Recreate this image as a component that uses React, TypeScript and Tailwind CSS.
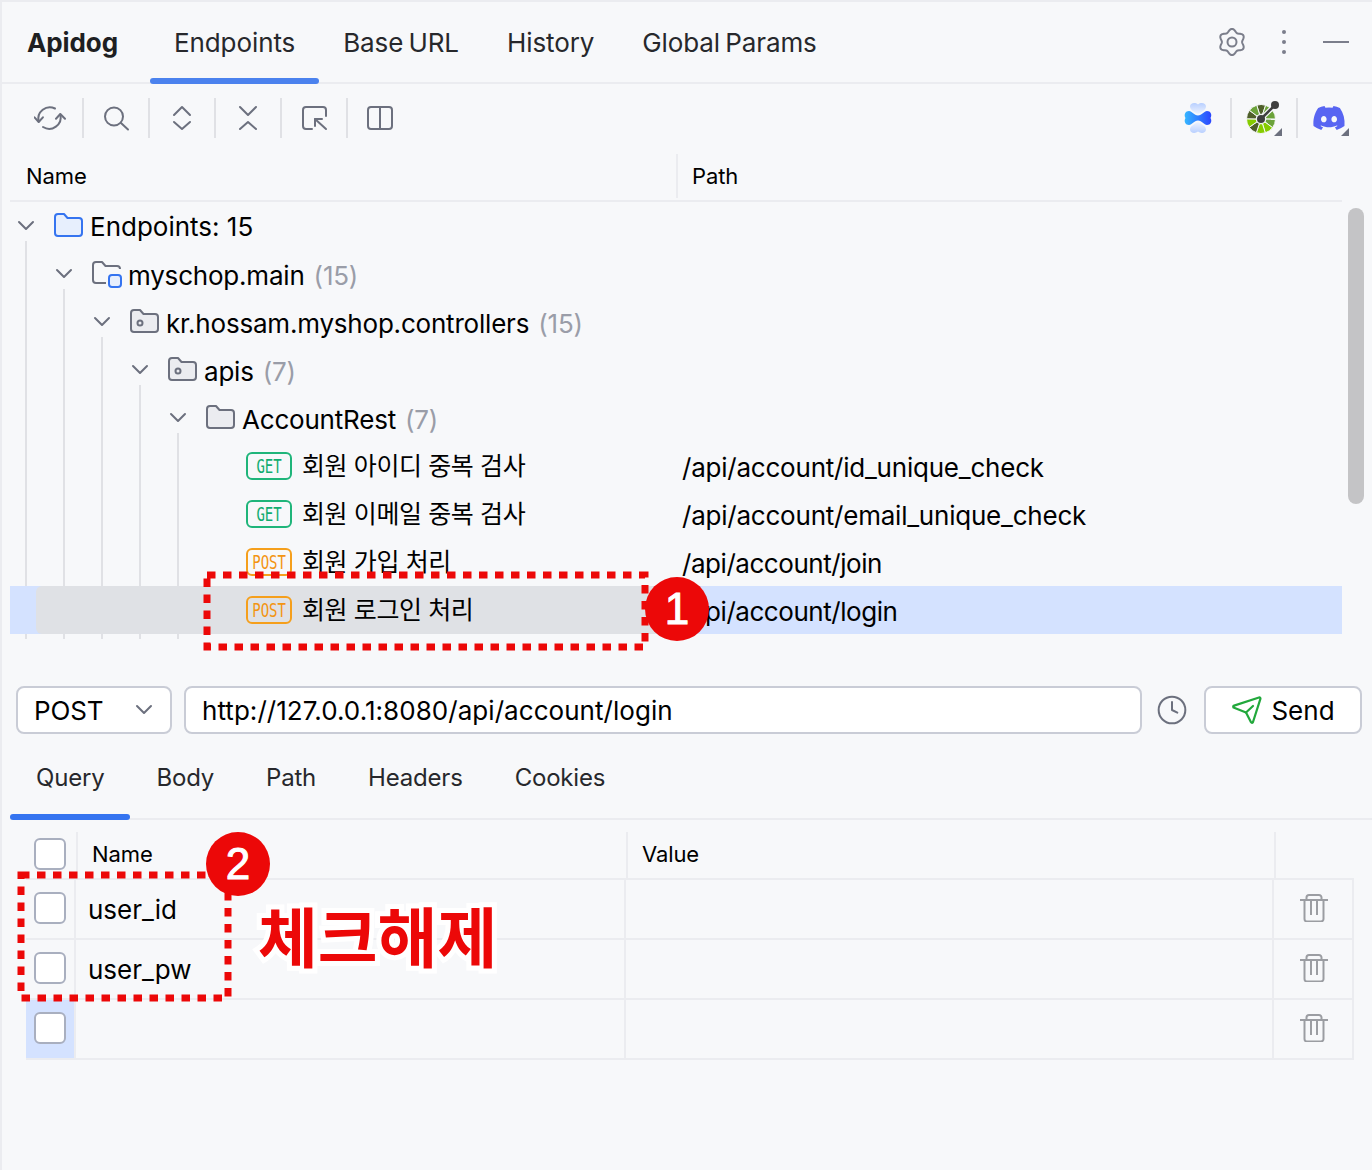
import { Clock } from "lucide-react";
import { FaDiscord } from "react-icons/fa6";

const topTabs = ["Endpoints", "Base URL", "History", "Global Params"];
const requestTabs = ["Query", "Body", "Path", "Headers", "Cookies"];

function ToolIcon({ children }: { children: React.ReactNode }) {
    return (
        <svg viewBox="0 0 32 32" className="h-8 w-8" fill="none" stroke="#6c707e" strokeWidth="2" strokeLinecap="round" strokeLinejoin="round">
            {children}
        </svg>
    );
}

const toolbar = [
    <>
        <path d="M0.500 15.300L4.700 20l4.200-4.700" />
        <path d="M4.700 19.500A11.500 11.500 0 0 1 21 6.500" />
        <path d="M22 16.700L26.300 12l4.700 4.700" />
        <path d="M26.300 12.500A11.500 11.500 0 0 1 9 25" />
    </>,
    <>
        <circle cx="14" cy="14.500" r="9" />
        <path d="M21 21l7 6.500" />
    </>,
    <>
        <path d="M8 13l8-8 8 8" />
        <path d="M8 20l8 7 8-7" />
    </>,
    <>
        <path d="M8 5l8 8 8-8" />
        <path d="M8 27l8-7 8 7" />
    </>,
    <>
        <path d="M14 27H8a3 3 0 0 1-3-3V8a3 3 0 0 1 3-3h17a3 3 0 0 1 3 3v6" />
        <path d="M28 27L17 17" />
        <path d="M17 24v-7h7" />
    </>,
    <>
        <rect x="4" y="5" width="24" height="22" rx="3" />
        <path d="M16 5v22" />
    </>,
];

function GearIcon() {
    const points: string[] = [];
    for (let i = 0; i < 120; i++) {
        const a = (i / 120) * Math.PI * 2;
        const r = 11.6 + 1.5 * Math.cos(6 * a);
        points.push(`${15 + r * Math.sin(a)},${15 - r * Math.cos(a)}`);
    }
    return (
        <svg viewBox="0 0 30 30" className="h-[30px] w-[30px]" fill="none" stroke="#7b7e8b" strokeWidth="2">
            <polygon points={points.join(" ")} strokeLinejoin="round" />
            <circle cx="15" cy="15" r="4.500" />
        </svg>
    );
}

function Corner() {
    return (
        <svg viewBox="0 0 8 8" className="absolute bottom-0 right-0 h-2 w-2">
            <path d="M8 0v8H0z" fill="#6c707e" />
        </svg>
    );
}

function BoneLogo() {
    return (
        <svg viewBox="0 0 32 32" className="h-8 w-8">
            <defs>
                <linearGradient id="bone" x1="0" y1="0" x2="1" y2="0">
                    <stop offset="0" stopColor="#35b6ff" />
                    <stop offset="1" stopColor="#2b45ff" />
                </linearGradient>
                <linearGradient id="heartTop" x1="0" y1="0" x2="0" y2="1">
                    <stop offset="0" stopColor="#b9d0ff" />
                    <stop offset="1" stopColor="#eef3ff" />
                </linearGradient>
                <linearGradient id="heartBottom" x1="0" y1="0" x2="0" y2="1">
                    <stop offset="0" stopColor="#eef3ff" />
                    <stop offset="1" stopColor="#b9d0ff" />
                </linearGradient>
            </defs>
            <path d="M16 12C12 10 8 7.500 8 4.500 8 1 13 0 16 2.500 19 0 24 1 24 4.500c0 3-4 5.500-8 7.500z" fill="url(#heartTop)" />
            <path d="M16 20c-4 2-8 4.500-8 7.500 0 3.500 5 4.500 8 2 3 2.500 8 1.500 8-2 0-3-4-5.500-8-7.500z" fill="url(#heartBottom)" />
            <path d="M7 9c3 0 5 4.500 9 4.500s6-4.500 9-4.500c3.500 0 5.500 3.500 3.500 7 2 3.500 0 7-3.500 7-3 0-5-4.500-9-4.500s-6 4.500-9 4.500c-3.500 0-5.500-3.500-3.500-7-2-3.500 0-7 3.500-7z" fill="url(#bone)" />
        </svg>
    );
}

function OpenApiLogo() {
    const colors = ["#4f5f2a", "#6ba23a", "#6ba23a", "#6ba23a", "#86cc00", "#86cc00", "#4f5f2a", "#86cc00", "#4f5f2a", "#6ba23a"];
    const cx = 15;
    const cy = 19;
    const point = (r: number, a: number) => `${cx + r * Math.sin(a)} ${cy - r * Math.cos(a)}`;
    return (
        <svg viewBox="0 0 34 36" className="h-9 w-[34px]">
            {colors.map((c, i) => {
                const a = (i * Math.PI * 2) / 10 - 0.3;
                const b = a + (Math.PI * 2) / 10;
                return (
                    <path
                        key={i}
                        d={`M${point(5, a)} L${point(14.5, a)} A14.5 14.5 0 0 1 ${point(14.5, b)} L${point(5, b)} Z`}
                        fill={c}
                        stroke="#f7f8fa"
                        strokeWidth="1"
                    />
                );
            })}
            <path d={`M${cx} ${cy}L29 5`} stroke="#f7f8fa" strokeWidth="5" />
            <path d={`M${cx} ${cy}L29 5`} stroke="#3f3f3f" strokeWidth="2.500" />
            <circle cx={cx} cy={cy} r="4" fill="#3f3f3f" />
            <circle cx="29" cy="5" r="4" fill="#3f3f3f" />
        </svg>
    );
}

type FolderKind = "root" | "module" | "package" | "plain";

function FolderIcon({ kind }: { kind: FolderKind }) {
    const blue = kind === "root";
    const stroke = blue ? "#3574f0" : "#6c707e";
    const fill = blue ? "#e7effd" : "#ebecf0";
    return (
        <svg viewBox="0 0 30 28" className="h-7 w-[30px] shrink-0" fill="none" strokeWidth="2">
            {kind === "module" ? (
                <>
                    <path d="M14 23H4a3 3 0 0 1-3-3V5a3 3 0 0 1 3-3h6l3.500 4H25a3 3 0 0 1 3 3" stroke={stroke} fill="none" strokeLinejoin="round" />
                    <rect x="17" y="15" width="12" height="12" rx="3" stroke="#3574f0" fill="#e7effd" />
                </>
            ) : (
                <>
                    <path d="M4 2h6l3.500 4H25a3 3 0 0 1 3 3v12a3 3 0 0 1-3 3H4a3 3 0 0 1-3-3V5a3 3 0 0 1 3-3z" stroke={stroke} fill={fill} strokeLinejoin="round" />
                    {kind === "package" && <circle cx="10" cy="15" r="2.500" stroke={stroke} />}
                </>
            )}
        </svg>
    );
}

function Chevron({ className }: { className?: string }) {
    return (
        <svg viewBox="0 0 20 12" className={className} fill="none" stroke="#6c707e" strokeWidth="2" strokeLinecap="round" strokeLinejoin="round">
            <path d="M3 2l7 7 7-7" />
        </svg>
    );
}

function FolderRow({ pad, kind, label, count }: { pad: string; kind: FolderKind; label: string; count?: string }) {
    const nudge = kind === "root" ? "" : "mt-0.5";
    return (
        <div className={`flex h-12 items-center text-[26px] text-black ${kind === "root" ? "tracking-normal" : "tracking-[-0.2px]"} ${pad}`}>
            <Chevron className="h-3 w-5 shrink-0" />
            <span className="ml-[18px] mr-[6px]">
                <FolderIcon kind={kind} />
            </span>
            <span className={`whitespace-nowrap ${nudge}`}>{label}</span>
            {count && <span className={`ml-[9px] text-[#9a9da8] ${nudge}`}>{count}</span>}
        </div>
    );
}

function MethodBadge({ method }: { method: "GET" | "POST" }) {
    const tone = method === "GET" ? "border-[#1fb57a] text-[#12ad70]" : "border-[#f59f1c] text-[#f39412]";
    return (
        <span className={`flex h-7 w-[46px] shrink-0 items-center justify-center rounded-md border-2 ${tone}`}>
            <span className="scale-x-[0.7] whitespace-nowrap text-[20px] [font-family:'DejaVu_Sans_Mono',monospace]">{method}</span>
        </span>
    );
}

function EndpointRow({ method, label, path, active }: { method: "GET" | "POST"; label: string; path: string; active?: boolean }) {
    return (
        <div className={`flex h-12 items-center text-[26px] text-black ${active ? "relative bg-[#d4e2ff]" : ""}`}>
            <div className="flex h-12 w-[667px] items-center pl-[236px]">
                {active && <span className="absolute bottom-0 left-[26px] top-0 w-[641px] rounded-l-md bg-[#dfe1e5]" />}
                <span className="relative flex items-center">
                    <MethodBadge method={method} />
                    <span className="ml-[10px] mt-0.5 whitespace-nowrap text-[25px] tracking-[-0.4px]">{label}</span>
                </span>
            </div>
            <span className={`ml-[5px] mt-0.5 whitespace-nowrap ${method === "POST" ? "tracking-[-0.45px]" : "tracking-[-0.22px]"}`}>{path}</span>
        </div>
    );
}

function Checkbox() {
    return <span className="block h-8 w-8 rounded-md border-2 border-[#a9afbf] bg-white" />;
}

function TrashIcon() {
    return (
        <svg viewBox="0 0 28 28" className="ml-0.5 h-7 w-7" fill="none" stroke="#9b9da2" strokeWidth="2">
            <path d="M0 6h28" />
            <path d="M6.500 6V3.500a2.500 2.500 0 0 1 2.500-2.500h10a2.500 2.500 0 0 1 2.500 2.500V6" />
            <path d="M4.500 6v19a2.500 2.500 0 0 0 2.500 2.500h14a2.500 2.500 0 0 0 2.500-2.500V6" />
            <path d="M11 6v15M17 6v15" />
        </svg>
    );
}

function ParamRow({ name, active }: { name?: string; active?: boolean }) {
    return (
        <div className="flex h-[60px] border-b-2 border-[#ebecf0] text-[26px] text-black">
            <div className={`flex w-[50px] items-center border-r-2 border-[#ebecf0] pb-0.5 pl-2 ${active ? "bg-[#d4e2ff]" : ""}`}>
                <Checkbox />
            </div>
            <div className="flex w-[550px] items-center border-r-2 border-[#ebecf0] pl-3">{name}</div>
            <div className="w-[648px] border-r-2 border-[#ebecf0]" />
            <div className="flex flex-1 items-center justify-center pb-0.5">
                <TrashIcon />
            </div>
        </div>
    );
}

export default function App() {
    return (
        <div className="relative h-[1170px] w-[1372px] overflow-hidden bg-[#f7f8fa] shadow-[inset_2px_2px_0_#ebecf0] [font-family:Inter,'Noto_Sans_CJK_KR',sans-serif]">
            {/* top tabs */}
            <header className="flex h-[84px] items-center border-b-2 border-[#ebecf0] pl-[27px] pr-[10px] pt-[2px]">
                <span className="mr-8 text-[26px] font-bold tracking-[-0.1px] text-[#1e1f22]">Apidog</span>
                {topTabs.map((tab, i) => (
                    <div key={tab} className="relative flex h-full items-center px-6 text-[26px] tracking-[-0.1px] text-[#27282c] [word-spacing:-2px]">
                        {tab}
                        {i === 0 && <span className="absolute -bottom-0.5 left-0 right-0 h-1.5 rounded-full bg-[#4b82ee]" />}
                    </div>
                ))}
                <div className="ml-auto flex items-center">
                    <span className="flex w-[52px] justify-center">
                        <GearIcon />
                    </span>
                    <span className="flex w-[52px] flex-col items-center gap-1.5">
                        <i className="h-1 w-1 rounded-full bg-[#7b7e8b]" />
                        <i className="h-1 w-1 rounded-full bg-[#7b7e8b]" />
                        <i className="h-1 w-1 rounded-full bg-[#7b7e8b]" />
                    </span>
                    <span className="flex w-[52px] justify-center">
                        <i className="h-0.5 w-[26px] bg-[#7b7e8b]" />
                    </span>
                </div>
            </header>

            {/* toolbar */}
            <div className="flex h-[68px] items-center pl-[18px] pr-[10px]">
                {toolbar.map((icon, i) => (
                    <div key={i} className="flex items-center">
                        <span className="flex w-16 justify-center">
                            <ToolIcon>{icon}</ToolIcon>
                        </span>
                        {i < toolbar.length - 1 && <span className="h-10 w-0.5 bg-[#e0e1e5]" />}
                    </div>
                ))}
                <div className="ml-auto flex items-center">
                    <span className="flex w-16 justify-center">
                        <BoneLogo />
                    </span>
                    <span className="h-10 w-0.5 bg-[#e0e1e5]" />
                    <span className="flex w-16 justify-center">
                        <span className="relative block h-9 w-[36px]">
                            <OpenApiLogo />
                            <Corner />
                        </span>
                    </span>
                    <span className="h-10 w-0.5 bg-[#e0e1e5]" />
                    <span className="flex w-16 justify-center">
                        <span className="relative flex h-9 w-[38px] items-center pl-px">
                            <FaDiscord className="h-[34px] w-[34px] text-[#5865f2]" />
                            <Corner />
                        </span>
                    </span>
                </div>
            </div>

            {/* tree header */}
            <div className="ml-[10px] flex h-[50px] w-[1332px] items-center border-b-2 border-[#ebecf0] text-[22px] tracking-[-0.1px] text-black">
                <div className="flex h-11 w-[668px] items-center border-r-2 border-[#ebecf0] pl-4">Name</div>
                <div className="pl-[14px]">Path</div>
            </div>

            {/* tree */}
            <div className="relative ml-[10px] h-[437px] w-[1332px]">
                <i className="absolute bottom-0 left-[15px] top-[39px] w-0.5 bg-[#e0e1e5]" />
                <i className="absolute bottom-0 left-[53px] top-[87px] w-0.5 bg-[#e0e1e5]" />
                <i className="absolute bottom-0 left-[91px] top-[135px] w-0.5 bg-[#e0e1e5]" />
                <i className="absolute bottom-0 left-[129px] top-[183px] w-0.5 bg-[#e0e1e5]" />
                <i className="absolute bottom-0 left-[167px] top-[231px] w-0.5 bg-[#e0e1e5]" />
                <div className="relative">
                    <FolderRow pad="pl-[6px]" kind="root" label="Endpoints: 15" />
                    <FolderRow pad="pl-[44px]" kind="module" label="myschop.main" count="(15)" />
                    <FolderRow pad="pl-[82px]" kind="package" label="kr.hossam.myshop.controllers" count="(15)" />
                    <FolderRow pad="pl-[120px]" kind="package" label="apis" count="(7)" />
                    <FolderRow pad="pl-[158px]" kind="plain" label="AccountRest" count="(7)" />
                    <EndpointRow method="GET" label="회원 아이디 중복 검사" path="/api/account/id_unique_check" />
                    <EndpointRow method="GET" label="회원 이메일 중복 검사" path="/api/account/email_unique_check" />
                    <EndpointRow method="POST" label="회원 가입 처리" path="/api/account/join" />
                    <EndpointRow method="POST" label="회원 로그인 처리" path="/api/account/login" active />
                </div>
            </div>
            <div className="absolute left-[1348px] top-[208px] h-[296px] w-4 rounded-lg bg-[#c4c4c6]" />

            {/* request line */}
            <div className="mt-[47px] flex h-12 items-center pl-4 text-[26px] text-black">
                <div className="flex h-12 w-[156px] items-center justify-between rounded-lg border-2 border-[#c9ccd6] bg-white pl-4 pr-4 tracking-[-0.1px]">
                    POST
                    <Chevron className="h-3 w-5" />
                </div>
                <div className="ml-3 flex h-12 w-[958px] items-center rounded-lg border-2 border-[#c9ccd6] bg-white pl-4 tracking-[0.05px]">
                    http://127.0.0.1:8080/api/account/login
                </div>
                <Clock className="ml-[14px] h-8 w-8 text-[#6c707e]" strokeWidth={1.5} />
                <div className="ml-[16px] flex h-12 w-[158px] items-center justify-center gap-[10px] rounded-lg border-2 border-[#c9ccd6] bg-white">
                    <svg viewBox="-2 0 30 30" className="h-[30px] w-[30px] overflow-visible" fill="none" stroke="#22a83c" strokeWidth="2.200" strokeLinejoin="round">
                        <path d="M.5 12.500c-.6-.8-.3-1.600.6-1.900L26 2.500c1-.3 1.700.4 1.400 1.400L20 27c-.4 1-1.400 1.100-2 .2l-5-9.700z" />
                        <path d="M13 17.500L20 11" strokeLinecap="round" />
                    </svg>
                    Send
                </div>
            </div>

            {/* request tabs */}
            <div className="ml-[10px] flex h-[86px] items-center border-b-2 border-[#ebecf0] text-[24px] tracking-[-0.2px] text-[#27282c]">
                {requestTabs.map((tab, i) => (
                    <div key={tab} className="relative flex h-full items-center px-[26px] pt-1">
                        {tab}
                        {i === 0 && <span className="absolute -bottom-0.5 left-0 right-0 h-1.5 rounded-full bg-[#3574f0]" />}
                    </div>
                ))}
            </div>

            {/* params table */}
            <div className="ml-[26px] mt-3 flex h-[46px] w-[1328px] items-center text-[22px] tracking-[-0.1px] text-black">
                <div className="flex h-full w-[52px] items-center border-r-2 border-[#ebecf0] pb-0.5 pl-2">
                    <Checkbox />
                </div>
                <div className="flex h-full w-[550px] items-center border-r-2 border-[#ebecf0] pb-0.5 pl-[14px]">Name</div>
                <div className="flex h-full w-[648px] items-center border-r-2 border-[#ebecf0] pb-0.5 pl-[14px]">Value</div>
            </div>
            <div className="ml-[26px] w-[1328px] border-r-2 border-t-2 border-[#ebecf0]">
                <ParamRow name="user_id" />
                <ParamRow name="user_pw" />
                <ParamRow active />
            </div>

            {/* annotations */}
            <svg viewBox="0 0 1372 1170" className="pointer-events-none absolute inset-0 h-[1170px] w-[1372px]" fill="none" stroke="#ec0808" strokeWidth="7" strokeDasharray="8.500 7.500">
                <rect x="207" y="575" width="438" height="72" />
                <rect x="21" y="875" width="207" height="123" />
            </svg>
            <div className="absolute left-[645px] top-[577px] flex h-16 w-16 items-center justify-center rounded-full bg-[#ec0808] text-[44px] text-white [-webkit-text-stroke:1px_white] [font-family:'Liberation_Sans',sans-serif]">
                1
            </div>
            <div className="absolute left-[206px] top-[832px] flex h-16 w-16 items-center justify-center rounded-full bg-[#ec0808] text-[44px] text-white [-webkit-text-stroke:1px_white] [font-family:'Liberation_Sans',sans-serif]">
                2
            </div>
            <div className="absolute left-[258px] top-[888px] whitespace-nowrap text-[65px] font-bold leading-[92px] text-[#ec0808] [-webkit-text-stroke:10px_white] [paint-order:stroke_fill] [font-family:'Noto_Sans_CJK_KR',sans-serif]">
                체크해제
            </div>
        </div>
    );
}
